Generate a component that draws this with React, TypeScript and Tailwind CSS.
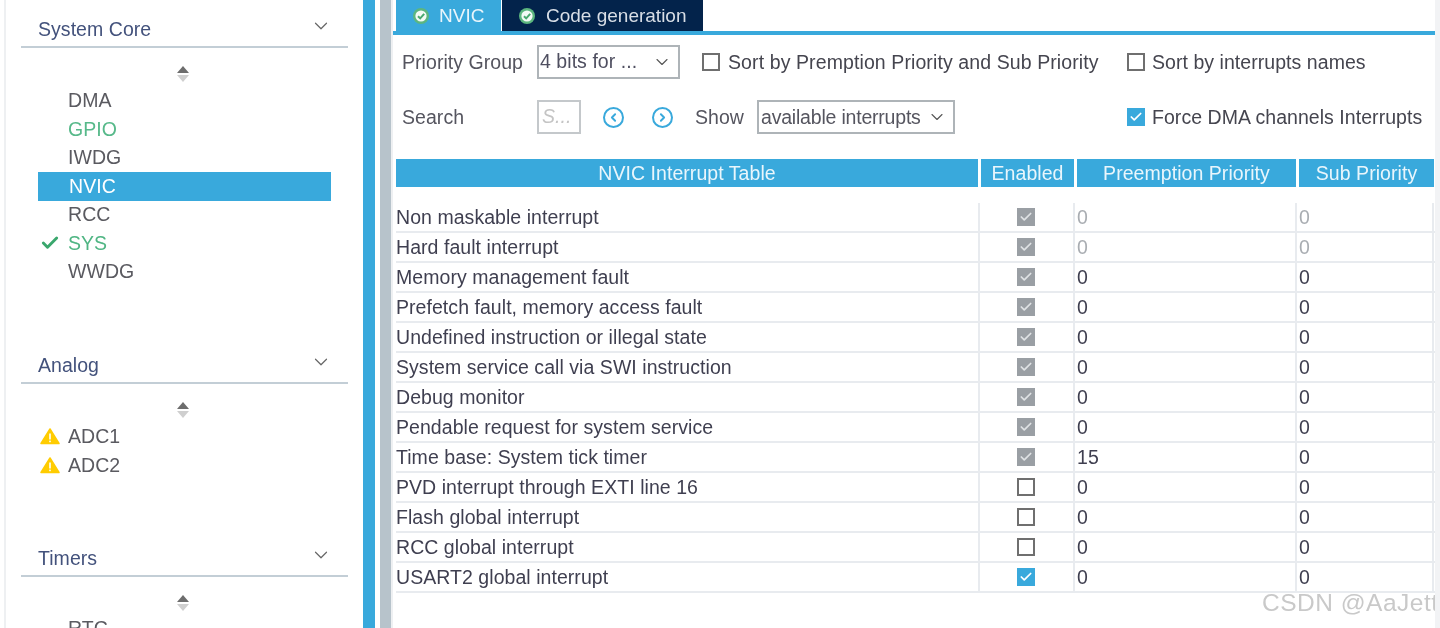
import React from 'react';
import { ChevronDown, ChevronLeft, ChevronRight, Check } from 'lucide-react';

const rows = [
  { name: 'Non maskable interrupt', state: 'locked', pre: '0', sub: '0', dim: true },
  { name: 'Hard fault interrupt', state: 'locked', pre: '0', sub: '0', dim: true },
  { name: 'Memory management fault', state: 'locked', pre: '0', sub: '0' },
  { name: 'Prefetch fault, memory access fault', state: 'locked', pre: '0', sub: '0' },
  { name: 'Undefined instruction or illegal state', state: 'locked', pre: '0', sub: '0' },
  { name: 'System service call via SWI instruction', state: 'locked', pre: '0', sub: '0' },
  { name: 'Debug monitor', state: 'locked', pre: '0', sub: '0' },
  { name: 'Pendable request for system service', state: 'locked', pre: '0', sub: '0' },
  { name: 'Time base: System tick timer', state: 'locked', pre: '15', sub: '0' },
  { name: 'PVD interrupt through EXTI line 16', state: 'off', pre: '0', sub: '0' },
  { name: 'Flash global interrupt', state: 'off', pre: '0', sub: '0' },
  { name: 'RCC global interrupt', state: 'off', pre: '0', sub: '0' },
  { name: 'USART2 global interrupt', state: 'on', pre: '0', sub: '0' },
];

function Box({ state }: { state: string }) {
  if (state === 'off') return <span className="block w-[18px] h-[18px] border-2 border-[#6f6f6f] bg-white" />;
  return (
    <span className={`flex items-center justify-center w-[18px] h-[18px] ${state === 'on' ? 'bg-[#39a9dc]' : 'bg-[#9a9fa4]'}`}>
      <Check size={14} strokeWidth={3} className={state === 'on' ? 'text-white' : 'text-[#dfe2e4]'} />
    </span>
  );
}

function SortArrows() {
  return (
    <svg width="14" height="18" viewBox="0 0 14 18" className="block">
      <path d="M7 1 L13 8 H1 Z" fill="#6d6d6d" />
      <path d="M7 17 L13 10 H1 Z" fill="#cfcfcf" />
    </svg>
  );
}

function Warn() {
  return (
    <svg width="20" height="17" viewBox="0 0 20 17" className="block">
      <path d="M10 1 L19 15.5 H1 Z" fill="#ffcc00" stroke="#ffcc00" strokeWidth="1.5" strokeLinejoin="round" />
      <rect x="9.2" y="5.5" width="1.6" height="6" fill="#fff" />
      <rect x="9.2" y="12.6" width="1.6" height="1.6" fill="#fff" />
    </svg>
  );
}

function TabTick() {
  return (
    <svg width="16" height="16" viewBox="0 0 16 16" className="block shrink-0">
      <circle cx="8" cy="8" r="8" fill="#5cb67f" />
      <circle cx="8" cy="8" r="5.6" fill="#f4fbf6" />
      <path d="M5 8.2 L7.2 10.4 L11.2 5.9" fill="none" stroke="#4aa96f" strokeWidth="2" />
    </svg>
  );
}

function SectionHead({ title }: { title: string }) {
  return (
    <div className="flex items-center justify-between h-[29px] ml-[15px] w-[327px] pl-[17px] pr-[17px] pb-[6px] border-b-2 border-[#c3ced6] text-[#43527c]">
      <span>{title}</span>
      <ChevronDown size={22} strokeWidth={1.3} className="text-[#666] -mt-[7px] -mr-[1px]" />
    </div>
  );
}

function SideItem({ label, color = 'text-[#5a5a60]', icon }: { label: string; color?: string; icon?: React.ReactNode }) {
  return (
    <div className={`flex items-center h-[28.5px] ml-[32px] w-[293px] ${color}`}>
      <span className="flex items-center w-[30px] pl-[2px]">{icon}</span>
      <span>{label}</span>
    </div>
  );
}

export default function App() {
  return (
    <div className="flex h-[628px] w-[1440px] overflow-hidden relative bg-white text-[19.5px] tracking-[0.05px] leading-none font-['Liberation_Sans',Arial,sans-serif] blur-[0.4px]">
      {/* Left: categories */}
      <aside className="w-[363px] h-full shrink-0 ml-[4px] -mr-[4px] border-l-2 border-[#eef0f2] pt-[19px]">
        <SectionHead title="System Core" />
        <div className="flex justify-start ml-[170px] mt-[17px] mb-[3.5px]"><SortArrows /></div>
        <SideItem label="DMA" />
        <SideItem label="GPIO" color="text-[#57b98a]" />
        <SideItem label="IWDG" />
        <div className="flex items-center h-[28.5px] ml-[32px] w-[293px] bg-[#39a9dc] text-white pl-[31px]">NVIC</div>
        <SideItem label="RCC" />
        <SideItem label="SYS" color="text-[#4fb583]" icon={<Check size={20} strokeWidth={3.5} className="text-[#3aa76d]" />} />
        <SideItem label="WWDG" />

        <div className="mt-[69px]"><SectionHead title="Analog" /></div>
        <div className="flex justify-start ml-[170px] mt-[17px] mb-[3.5px]"><SortArrows /></div>
        <SideItem label="ADC1" icon={<Warn />} />
        <SideItem label="ADC2" icon={<Warn />} />

        <div className="mt-[68.5px]"><SectionHead title="Timers" /></div>
        <div className="flex justify-start ml-[170px] mt-[17px] mb-[2px]"><SortArrows /></div>
        <SideItem label="RTC" />
      </aside>

      {/* Splitter */}
      <div className="w-[12px] shrink-0 bg-[#39a9dc]" />
      <div className="w-[5px] shrink-0 bg-white" />
      <div className="w-[11px] shrink-0 bg-[#b7c3cb]" />
      <div className="w-[2px] shrink-0 bg-[#eef0f2]" />

      {/* Main */}
      <main className="w-[1042px] shrink-0 h-full text-[#55555f]">
        <div className="flex h-[31px] pl-[3px] gap-[1px] items-stretch text-[19px] tracking-normal">
          <div className="flex items-center w-[105px] bg-[#39a9dc] text-[#e8f5fb] pl-[17px] gap-[10px]"><TabTick />NVIC</div>
          <div className="flex items-center w-[201px] bg-[#03234b] text-[#d8dee6] pl-[17px] gap-[11px]"><TabTick />Code generation</div>
        </div>
        <div className="h-[4px] bg-[#39a9dc]" />

        <div className="flex items-center h-[34px] mt-[10px] pl-[9px]">
          <span className="w-[135px] pt-[2px]">Priority Group</span>
          <div className="flex items-center justify-between w-[143px] h-[34px] border-2 border-[#aeb4b8] pl-[1px] pr-[6px] text-[#4f4f60]">
            <span>4 bits for ...</span>
            <ChevronDown size={20} strokeWidth={1.3} className="text-[#555]" />
          </div>
          <span className="ml-[22px] mr-[8px]"><Box state="off" /></span>
          <span className="text-[#45454f] w-[399px] tracking-[0.1px] pt-[2px]">Sort by Premption Priority and Sub Priority</span>
          <span className="mr-[7px]"><Box state="off" /></span>
          <span className="text-[#45454f] pt-[2px]">Sort by interrupts names</span>
        </div>

        <div className="flex items-center h-[34px] mt-[21px] pl-[9px]">
          <span className="w-[135px] pt-[2px]">Search</span>
          <div className="flex items-center w-[44px] h-[34px] border-2 border-[#c4c8cb] pl-[3px] italic text-[#c4c4c4]">S...</div>
          <span className="ml-[22px] flex items-center justify-center w-[21px] h-[21px] rounded-full border-[2.5px] border-[#39a9dc]"><ChevronLeft size={13} strokeWidth={3.5} className="text-[#39a9dc]" /></span>
          <span className="ml-[28px] flex items-center justify-center w-[21px] h-[21px] rounded-full border-[2.5px] border-[#39a9dc]"><ChevronRight size={13} strokeWidth={3.5} className="text-[#39a9dc]" /></span>
          <span className="ml-[22px] w-[62px] pt-[2px]">Show</span>
          <div className="flex items-center justify-between w-[198px] h-[34px] border-2 border-[#aeb4b8] pl-[2px] pr-[6px]">
            <span className="tracking-[-0.2px] pt-[2px]">available interrupts</span>
            <ChevronDown size={20} strokeWidth={1.3} className="text-[#555]" />
          </div>
          <span className="ml-[172px] mr-[7px]"><Box state="on" /></span>
          <span className="text-[#45454f] pt-[2px]">Force DMA channels Interrupts</span>
        </div>

        <div className="grid grid-cols-[582px_93px_219px_135px] gap-x-[3px] h-[28px] mt-[25px] ml-[3px] w-[1041px] bg-white text-[#e9f6fc]">
          <div className="flex items-center justify-center pt-[2px] bg-[#39a9dc]">NVIC Interrupt Table</div>
          <div className="flex items-center justify-center pt-[2px] bg-[#39a9dc]">Enabled</div>
          <div className="flex items-center justify-center pt-[2px] bg-[#39a9dc]">Preemption Priority</div>
          <div className="flex items-center justify-center pt-[2px] bg-[#39a9dc]">Sub Priority</div>
        </div>

        <div className="mt-[16px] ml-[3px] w-[1041px]">
          {rows.map((r) => (
            <div key={r.name} className="grid grid-cols-[584px_95px_222px_137px] h-[30px] border-b-2 border-[#e8ebef] text-[#3f3f50]">
              <div className="flex items-center pt-[2px] border-r-2 border-[#e8ebef]">{r.name}</div>
              <div className="flex items-center justify-center pr-[1px] border-r-2 border-[#e8ebef]"><Box state={r.state} /></div>
              <div className={`flex items-center pl-[2px] pt-[2px] border-r-2 border-[#e8ebef] ${r.dim ? 'text-[#a9adb2]' : ''}`}>{r.pre}</div>
              <div className={`flex items-center pl-[2px] pt-[2px] border-r-2 border-[#e8ebef] ${r.dim ? 'text-[#a9adb2]' : ''}`}>{r.sub}</div>
            </div>
          ))}
        </div>
      </main>

      {/* Right edge */}
      <div className="w-[5px] shrink-0 bg-[#f2f3f5]" />

      <span className="absolute left-[1262px] top-[589px] w-[173px] overflow-hidden whitespace-nowrap text-[24.5px] leading-[28px] tracking-[0.5px] text-[#c9c9c9]">CSDN @AaJett</span>
    </div>
  );
}
